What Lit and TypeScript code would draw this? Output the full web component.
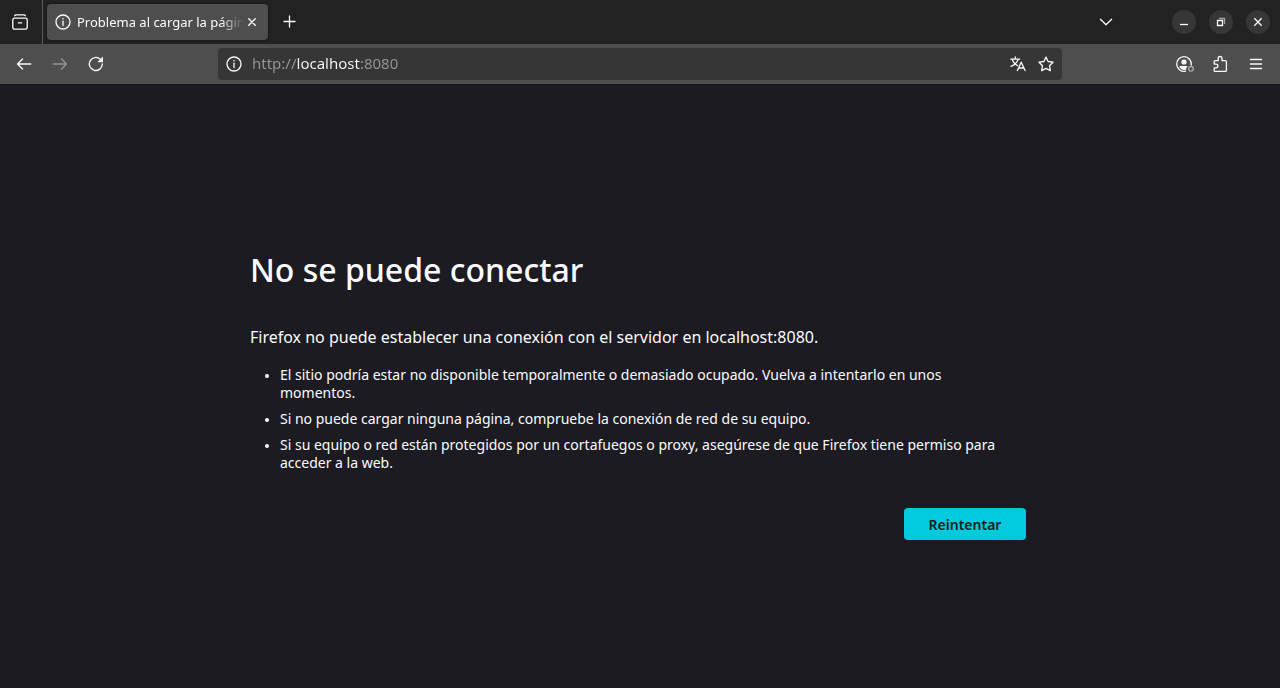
import { LitElement, html, svg, css } from "lit";
import { customElement } from "lit/decorators.js";

const icon = (content: unknown, cls = "") => html`<svg class="icon ${cls}" viewBox="0 0 16 16" aria-hidden="true">${content}</svg>`;

const icons = {
  view: svg`<path d="M2.6 1.7Q3 .8 4 .8H12Q13 .8 13.4 1.7"/><rect x=".8" y="4.2" width="14.4" height="11" rx="1.6"/><path d="M6.3 8.8h3.4"/>`,
  info: svg`<circle cx="8" cy="8" r="7"/><path d="M8 7.2v4.4"/><circle class="fill" cx="8" cy="4.8" r=".8"/>`,
  close: svg`<path d="M4.3 4.3l7.4 7.4M11.7 4.3l-7.4 7.4"/>`,
  plus: svg`<path d="M7.5 2v11M2 7.5h11"/>`,
  chevron: svg`<path d="M2.4 5.2L8 10.8l5.6-5.6"/>`,
  back: svg`<path d="M6.5 3L1.5 8l5 5M1.8 8h12.9"/>`,
  forward: svg`<path d="M9.5 3l5 5-5 5M14.2 8H1.3"/>`,
  reload: svg`<path d="M12.2 3.2A6.5 6.5 0 1 0 14.3 8"/><path class="fill" d="M15 1.2v4.6q0 .5-.5.5H10q-.6 0-.2-.5l4.7-4.8q.5-.4.5.2z"/>`,
  translate: svg`<path d="M.7 3.1h9M5.2.8v2.3M2.2 3.3q1.6 4.6 5.4 6.3M8.2 3.3Q6.6 8.2 1 10.4M7.4 14.6l3.8-8.4 3.9 8.4M8.7 12h5"/>`,
  star: svg`<path d="M8 1.1l2.1 4.4 4.9.7-3.5 3.5.9 5L8 12.4l-4.4 2.3.9-5L1 6.2l4.9-.7z"/>`,
  account: svg`<path d="M15.2 9A7.3 7.3 0 1 0 9.6 15.1"/><circle class="fill" cx="8" cy="6" r="2.6"/><path class="fill" d="M3.5 10.1h8.2q-1.7 1.3-1.5 3.3-3.9 1.7-6.7-1.9z"/><circle class="dim" cx="15" cy="12.8" r="2.3"/>`,
  puzzle: svg`<path d="M2.2 8V5.6q0-1 1-1h3V2.4a1.9 1.9 0 0 1 3.8 0v2.2h3.2q1.2 0 1.2 1.2v8.4q0 1.2-1.2 1.2H3.2q-1 0-1-1v-2.6h1.9a1.7 1.7 0 0 0 0-3.6z"/>`,
  menu: svg`<path d="M2.4 3.5h11.2M2.4 8h11.2M2.4 12.5h11.2"/>`,
  minimize: svg`<path d="M4 10.5h8"/>`,
  restore: svg`<path d="M4.5 6.5h5v5h-5z"/><path class="dim" d="M6 4.5h5.5V10"/>`,
};

const reasons = [
  "El sitio podría estar no disponible temporalmente o demasiado ocupado. Vuelva a intentarlo en unos momentos.",
  "Si no puede cargar ninguna página, compruebe la conexión de red de su equipo.",
  "Si su equipo o red están protegidos por un cortafuegos o proxy, asegúrese de que Firefox tiene permiso para acceder a la web.",
];

const shared = css`
  * { box-sizing: border-box; }
  button { border: 0; padding: 0; margin: 0; background: none; color: inherit; font: inherit; }
  .icon {
    display: block; width: 16px; height: 16px; flex: none; overflow: visible;
    fill: none; stroke: currentColor; stroke-width: 1.3; stroke-linecap: round; stroke-linejoin: round;
  }
  .icon .fill { fill: currentColor; stroke: none; }
  .icon .dim { opacity: 0.55; }
  .icon.small { width: 14px; height: 14px; stroke-width: 1.6; }
  .tool { display: grid; place-items: center; width: 36px; height: 32px; flex: none; border-radius: 4px; }
  .tool:disabled { opacity: 0.4; }
`;

@customElement("tab-strip")
class TabStrip extends LitElement {
  static styles = [shared, css`
    :host { display: flex; align-items: center; height: 44px; background: #222222; color: #fbfbfe; font-family: "Noto Sans", sans-serif; }
    .view { width: 42px; height: 44px; display: grid; place-items: center; padding-right: 2px; }
    .divider { width: 1px; align-self: stretch; background: #5a5a5a; margin-right: 4px; }
    .tab {
      display: flex; align-items: center; width: 221px; height: 36px; padding: 0 8px;
      background: #4e4e4e; border-radius: 4px; box-shadow: 0 0 3px rgba(0, 0, 0, 0.6);
    }
    .label {
      flex: 1; min-width: 0; margin-left: 6px; overflow: hidden; white-space: nowrap; font-size: 13px; line-height: 20px;
      mask-image: linear-gradient(to left, transparent, black 24px);
    }
    .close { display: grid; place-items: center; width: 16px; height: 24px; }
    .new { margin-left: 4px; }
    .spacer { flex: 1; }
    .controls { display: flex; gap: 13px; margin: 0 10px 0 48px; }
    .control { display: grid; place-items: center; width: 24px; height: 24px; border-radius: 50%; background: #373737; }
    .control .icon { stroke-linecap: butt; stroke-linejoin: miter; }
  `];
  render() {
    return html`
      <button class="view" aria-label="Firefox View">${icon(icons.view)}</button>
      <span class="divider"></span>
      <div class="tab" role="tab" aria-selected="true">
        ${icon(icons.info)}
        <span class="label">Problema al cargar la página</span>
        <button class="close" aria-label="Cerrar pestaña">${icon(icons.close, "small")}</button>
      </div>
      <button class="tool new" aria-label="Nueva pestaña">${icon(icons.plus)}</button>
      <span class="spacer"></span>
      <button class="tool" aria-label="Listar pestañas">${icon(icons.chevron)}</button>
      <div class="controls">
        <button class="control" aria-label="Minimizar">${icon(icons.minimize)}</button>
        <button class="control" aria-label="Restaurar">${icon(icons.restore)}</button>
        <button class="control" aria-label="Cerrar">${icon(icons.close)}</button>
      </div>`;
  }
}

@customElement("nav-bar")
class NavBar extends LitElement {
  static styles = [shared, css`
    :host {
      display: grid; grid-template-columns: 1fr minmax(200px, 844px) 1fr; align-items: center;
      height: 40px; background: #4e4e4e; color: #fbfbfe;
    }
    .group { display: flex; padding: 0 6px; }
    .end { justify-content: flex-end; }
    .url { display: flex; align-items: center; height: 32px; padding-left: 8px; padding-right: 2px; background: #363636; border-radius: 4px; }
    .field {
      flex: 1; min-width: 0; height: 32px; margin: 0 8px 0 10px; padding: 0 0 2px; border: 0; outline: 0;
      font: 15px/20px "Noto Sans", sans-serif; color: transparent; caret-color: #fbfbfe;
      background: linear-gradient(to right, #969696 45px, #fbfbfe 45px 108px, #969696 108px);
      -webkit-background-clip: text; background-clip: text;
    }
    .action { display: grid; place-items: center; width: 28px; height: 28px; }
  `];
  render() {
    return html`
      <div class="group">
        <button class="tool" aria-label="Atrás">${icon(icons.back)}</button>
        <button class="tool" aria-label="Adelante" disabled>${icon(icons.forward)}</button>
        <button class="tool" aria-label="Recargar">${icon(icons.reload)}</button>
      </div>
      <div class="url">
        ${icon(icons.info)}
        <input class="field" type="text" aria-label="Dirección" spellcheck="false" .value=${"http://localhost:8080"} />
        <button class="action" aria-label="Traducir">${icon(icons.translate)}</button>
        <button class="action" aria-label="Añadir a marcadores">${icon(icons.star)}</button>
      </div>
      <div class="group end">
        <button class="tool" aria-label="Cuenta">${icon(icons.account)}</button>
        <button class="tool" aria-label="Extensiones">${icon(icons.puzzle)}</button>
        <button class="tool" aria-label="Menú">${icon(icons.menu)}</button>
      </div>`;
  }
}

@customElement("app-root")
class AppRoot extends LitElement {
  static styles = [shared, css`
    :host {
      display: flex; flex-direction: column; min-height: 100vh; background: #1c1b22; color: #fbfbfe;
      font-family: "Noto Sans", sans-serif; font-size: 14px;
    }
    .page { flex: 1; display: grid; place-items: center; box-shadow: inset 0 1px #18171c; padding: 0 24px; }
    .error { width: 100%; max-width: 780px; padding-top: 18px; }
    .title { margin: 0; font-size: 32px; line-height: 40px; font-weight: 500; }
    .summary { margin: 36px 0 18px; font-size: 16px; line-height: 22px; }
    .reasons { margin: 0; padding: 0 20px 0 30px; font-size: 14px; line-height: 18px; display: grid; gap: 8px; }
    .reasons li::marker { font-size: 11px; }
    .actions { display: flex; justify-content: flex-end; margin-top: 36px; padding-right: 4px; }
    .retry { width: 122px; height: 32px; border-radius: 4px; background: #00cadb; color: #1c1b22; font-size: 14px; font-weight: 600; }
  `];
  render() {
    return html`
      <tab-strip></tab-strip>
      <nav-bar></nav-bar>
      <main class="page">
        <section class="error">
          <h1 class="title">No se puede conectar</h1>
          <p class="summary">Firefox no puede establecer una conexión con el servidor en localhost:8080.</p>
          <ul class="reasons">${reasons.map((r) => html`<li>${r}</li>`)}</ul>
          <div class="actions"><button class="retry">Reintentar</button></div>
        </section>
      </main>`;
  }
}
